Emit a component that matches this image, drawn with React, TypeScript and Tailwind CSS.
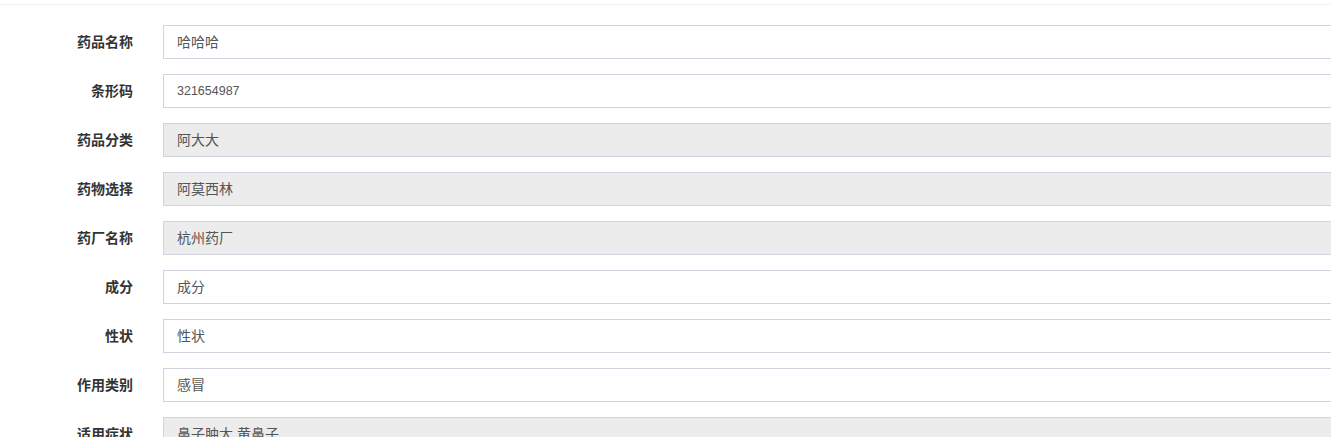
import React from "react"

const rows = [
  { label: "药品名称", value: "哈哈哈", disabled: false },
  { label: "条形码", value: "321654987", disabled: false, num: true },
  { label: "药品分类", value: "阿大大", disabled: true },
  { label: "药物选择", value: "阿莫西林", disabled: true },
  { label: "药厂名称", value: "杭州药厂", disabled: true },
  { label: "成分", value: "成分", disabled: false },
  { label: "性状", value: "性状", disabled: false },
  { label: "作用类别", value: "感冒", disabled: false },
  { label: "适用症状", value: "鼻子肿大,黄鼻子", disabled: true },
]

export default function App() {
  return (
    <div
      className="w-[1331px] h-[437px] overflow-hidden bg-white"
      style={{ fontFamily: '"Liberation Sans", "Noto Sans CJK SC", sans-serif' }}
    >
      <div className="mt-[4px] border-t border-[#f0f0f0] w-[1400px] pt-[20px]">
        {rows.map((row) => (
          <div key={row.label} className="flex items-center mb-[15px]">
            <label className="w-[133px] shrink-0 text-right text-[14px] font-bold text-[#333] pt-[1px]">
              {row.label}
            </label>
            <div
              className={
                "ml-[30px] flex-1 h-[34px] flex items-center px-[13px] pt-[1px] border border-[#d4d2de] text-[#555] " +
                (row.num ? "text-[12.5px] " : "text-[14px] ") +
                (row.disabled ? "bg-[#ececec]" : "bg-white")
              }
            >
              {row.value}
            </div>
          </div>
        ))}
      </div>
    </div>
  )
}
